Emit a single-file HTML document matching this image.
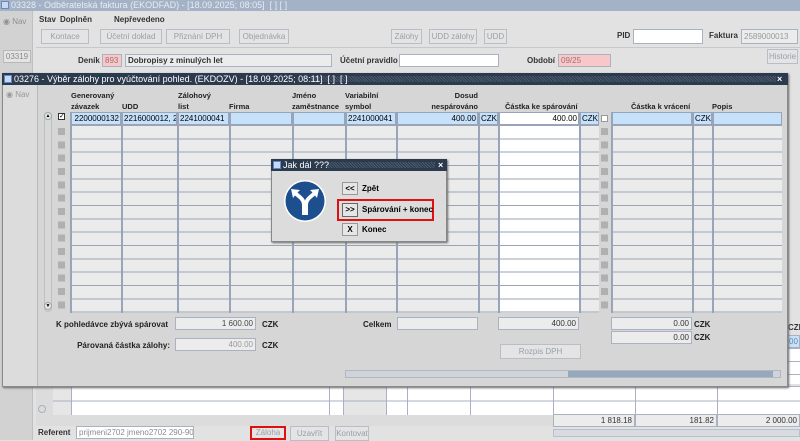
<!DOCTYPE html>
<html><head><meta charset="utf-8"><style>
*{box-sizing:border-box;margin:0;padding:0}
body{width:800px;height:440px;overflow:hidden;background:#e2e2e2;font-family:"Liberation Sans",Arial,sans-serif;font-size:8px;color:#000;position:relative}
.a{position:absolute;white-space:nowrap}
.b{font-weight:bold}
.fld{position:absolute;border:1px solid #a9b2c0;background:#ececec;height:13px;line-height:11px;padding:0 2px;font-size:8px;overflow:hidden;white-space:nowrap}
.btn{position:absolute;border:1px solid #b8bec8;background:#e4e4e4;color:#9aa0a8;text-align:center;height:15px;line-height:13px;font-size:8px;white-space:nowrap;overflow:hidden}
.col{position:absolute;top:125px;height:188px;border-left:2px solid #98a4b8;background:repeating-linear-gradient(to bottom,#9aa4b6 0,#9aa4b6 1px,#ebebeb 1px,#ebebeb 13.33px)}
.r1{position:absolute;top:112px;height:13px;background:#c6e2fb;border:1px solid #98a4b8;border-left-width:2px;line-height:11px;padding:0 1px;overflow:hidden;white-space:nowrap;font-size:8px}
.hd{position:absolute;font-weight:bold;font-size:7.5px;line-height:11px;color:#222;white-space:nowrap}
.cb{position:absolute;left:58px;width:7px;height:7px;border:1px solid #999;background:#eee}
.w{background:#fff}
.rt{text-align:right}
</style></head><body>
<!-- outer window -->
<div class="a" style="left:0;top:0;width:800px;height:11px;background:#a3b2c7"></div>
<div class="a" style="left:1px;top:1px;width:8px;height:8px;background:#c8d8f0;border:1px solid #6a88b8"></div>
<div class="a" style="left:11px;top:0;color:#e8ecf2;font-size:9px;line-height:11px">03328 - Odběratelská faktura (EKODFAD) - [18.09.2025; 08:05]&nbsp; [ ] [ ]</div>
<div class="a" style="left:0;top:11px;width:33px;height:429px;background:#d2d2d2;border-right:1px solid #c0c0c0"></div>
<div class="a" style="left:3px;top:17px;color:#909090;font-size:8px">◉ Nav</div>
<div class="a" style="left:3px;top:50px;width:28px;height:13px;border:1px solid #b8b8b8;background:#e4e4e4;color:#8a8a8a;font-size:8px;text-align:center;line-height:11px">03319</div>
<div class="a b" style="left:39px;top:15px;color:#333">Stav</div>
<div class="a b" style="left:60px;top:15px;color:#333">Doplněn</div>
<div class="a b" style="left:114px;top:15px;color:#333">Nepřevedeno</div>
<div class="btn" style="left:41px;top:29px;width:48px">Kontace</div>
<div class="btn" style="left:100px;top:29px;width:62px">Účetní doklad</div>
<div class="btn" style="left:166px;top:29px;width:64px">Přiznání DPH</div>
<div class="btn" style="left:239px;top:29px;width:50px">Objednávka</div>
<div class="btn" style="left:391px;top:29px;width:31px">Zálohy</div>
<div class="btn" style="left:429px;top:29px;width:48px">UDD zálohy</div>
<div class="btn" style="left:484px;top:29px;width:23px">UDD</div>
<div class="a b" style="left:617px;top:31px;color:#333">PID</div>
<div class="fld w" style="left:633px;top:29px;width:70px;height:15px"></div>
<div class="a b" style="left:709px;top:31px;color:#333">Faktura</div>
<div class="fld" style="left:741px;top:29px;width:57px;height:15px;color:#999;line-height:13px">2589000013</div>
<div class="a" style="left:36px;top:47px;width:764px;height:1px;background:#c8c8c8"></div>
<div class="a b" style="left:78px;top:56px;color:#333">Deník</div>
<div class="fld" style="left:102px;top:54px;width:20px;background:#f8c8c8;color:#a07070">893</div>
<div class="fld" style="left:125px;top:54px;width:207px;color:#333;font-weight:bold">Dobropisy z minulých let</div>
<div class="a b" style="left:340px;top:56px;color:#333">Účetní pravidlo</div>
<div class="fld w" style="left:399px;top:54px;width:100px"></div>
<div class="a b" style="left:527px;top:56px;color:#333">Období</div>
<div class="fld" style="left:558px;top:54px;width:53px;background:#f8c8c8;color:#a07070">09/25</div>
<div class="btn" style="left:767px;top:49px;width:31px">Historie</div>

<!-- outer lower table -->
<div class="a" style="left:36px;top:386px;width:764px;height:40px;background:#dcdcdc"></div>
<div class="a" style="left:53px;top:386px;width:747px;height:29px;background:repeating-linear-gradient(to bottom,#a8b2c2 0,#a8b2c2 1px,#fff 1px,#fff 14.5px)"></div>
<div class="a" style="left:53px;top:386px;width:18px;height:29px;background:repeating-linear-gradient(to bottom,#a8b2c2 0,#a8b2c2 1px,#e6e6e6 1px,#e6e6e6 14.5px)"></div>
<div class="a" style="left:343px;top:386px;width:43px;height:29px;background:repeating-linear-gradient(to bottom,#a8b2c2 0,#a8b2c2 1px,#e6e6e6 1px,#e6e6e6 14.5px)"></div>
<div class="a" style="left:71px;top:386px;width:1px;height:29px;background:#a8b2c2"></div>
<div class="a" style="left:329px;top:386px;width:1px;height:29px;background:#a8b2c2"></div>
<div class="a" style="left:343px;top:386px;width:1px;height:29px;background:#a8b2c2"></div>
<div class="a" style="left:386px;top:386px;width:1px;height:29px;background:#a8b2c2"></div>
<div class="a" style="left:407px;top:386px;width:1px;height:29px;background:#a8b2c2"></div>
<div class="a" style="left:470px;top:386px;width:1px;height:29px;background:#a8b2c2"></div>
<div class="a" style="left:553px;top:386px;width:1px;height:29px;background:#a8b2c2"></div>
<div class="a" style="left:635px;top:386px;width:1px;height:29px;background:#a8b2c2"></div>
<div class="a" style="left:717px;top:386px;width:1px;height:29px;background:#a8b2c2"></div>
<div class="fld rt" style="left:553px;top:414px;width:82px;color:#333">1 818.18</div>
<div class="fld rt" style="left:635px;top:414px;width:82px;color:#333">181.82</div>
<div class="fld rt" style="left:717px;top:414px;width:83px;color:#333">2 000.00</div>
<div class="a" style="left:553px;top:429px;width:247px;height:8px;background:#d8dce2;border:1px solid #b8c0cc"></div>
<div class="a" style="left:38px;top:405px;width:8px;height:8px;border-radius:4px;border:1px solid #a8b0bc"></div>
<div class="a b" style="left:38px;top:428px;color:#333">Referent</div>
<div class="fld w" style="left:76px;top:426px;width:118px;color:#8a8a8a">prijmeni2702 jmeno2702 290-9027</div>
<div class="btn" style="left:250px;top:426px;width:36px;border:2px solid #e01010;height:14px;line-height:10px">Záloha</div>
<div class="btn" style="left:290px;top:426px;width:39px">Uzavřít</div>
<div class="btn" style="left:335px;top:426px;width:34px">Kontovat</div>
<!-- outer right sliver -->
<div class="a b" style="left:788px;top:323px;color:#333">CZK</div>
<div class="fld" style="left:787px;top:335px;width:13px;background:#c6e2fb;color:#6a8ab0;padding:0 1px">00</div>
<div class="a" style="left:787px;top:348px;width:13px;height:36px;background:repeating-linear-gradient(to bottom,#a8b2c2 0,#a8b2c2 1px,#fff 1px,#fff 13px)"></div>

<!-- dialog -->
<div class="a" style="left:2px;top:73px;width:786px;height:314px;background:#d6d6d6;box-shadow:1px 1px 2px #666;border:1px solid #8a8a8a"></div>
<div class="a" style="left:2px;top:73px;width:786px;height:12px;background:#2c3a4e"></div>
<div class="a" style="left:310px;top:76px;width:466px;height:6px;background:repeating-linear-gradient(45deg,#2c3a4e 0,#2c3a4e 1px,#4c5a6e 1px,#4c5a6e 2px)"></div>
<div class="a" style="left:4px;top:75px;width:8px;height:8px;background:#c8d8f0;border:1px solid #5a88d0"></div>
<div class="a" style="left:14px;top:73px;color:#fff;font-size:9px;line-height:12px">03276 - Výběr zálohy pro vyúčtování pohled. (EKDOZV) - [18.09.2025; 08:11]&nbsp; [ ]&nbsp; [ ]</div>
<div class="a" style="left:777px;top:73px;color:#fff;font-size:9px;line-height:12px;font-weight:bold">×</div>
<div class="a" style="left:3px;top:85px;width:35px;height:301px;background:#dcdcdc;border-right:1px solid #b8b8b8"></div>
<div class="a" style="left:6px;top:90px;color:#999;font-size:8px">◉ Nav</div>

<!-- headers -->
<div class="hd" style="left:71px;top:90px">Generovaný<br>závazek</div>
<div class="hd" style="left:122px;top:101px">UDD</div>
<div class="hd" style="left:178px;top:90px">Zálohový<br>list</div>
<div class="hd" style="left:229px;top:101px">Firma</div>
<div class="hd" style="left:292px;top:90px">Jméno<br>zaměstnance</div>
<div class="hd" style="left:345px;top:90px">Variabilní<br>symbol</div>
<div class="hd" style="left:396px;top:90px;width:82px;text-align:right">Dosud<br>nespárováno</div>
<div class="hd" style="left:505px;top:101px">Částka ke spárování</div>
<div class="hd" style="left:631px;top:101px">Částka k vrácení</div>
<div class="hd" style="left:712px;top:101px">Popis</div>

<!-- scrollbar left -->
<div class="a" style="left:44px;top:112px;width:8px;height:200px;border:1px solid #c0c0c0;border-radius:4px;background:#d8d8d8"></div>
<div class="a" style="left:44px;top:112px;width:8px;height:8px;border:1px solid #9aa;border-radius:4px;background:#e8e8e8;font-size:5px;text-align:center;line-height:6px">▲</div>
<div class="a" style="left:44px;top:302px;width:8px;height:8px;border:1px solid #9aa;border-radius:4px;background:#e8e8e8;font-size:5px;text-align:center;line-height:6px">▼</div>

<!-- row1 -->
<div class="cb" style="top:113px;background:#fff;border-color:#333;font-size:7px;line-height:5px;text-align:center">✓</div>
<div class="r1 rt" style="left:70px;width:51px">2200000132</div>
<div class="r1" style="left:121px;width:56px">2216000012, 25</div>
<div class="r1" style="left:177px;width:52px">2241000041</div>
<div class="r1" style="left:229px;width:63px"></div>
<div class="r1" style="left:292px;width:53px"></div>
<div class="r1" style="left:345px;width:51px">2241000041</div>
<div class="r1 rt" style="left:396px;width:82px">400.00</div>
<div class="r1" style="left:478px;width:20px">CZK</div>
<div class="r1 rt" style="left:498px;width:81px;background:#fff">400.00</div>
<div class="r1" style="left:579px;width:20px">CZK</div>
<div class="cb" style="top:115px;left:601px;background:#fff"></div>
<div class="r1" style="left:611px;width:81px"></div>
<div class="r1" style="left:692px;width:20px">CZK</div>
<div class="r1" style="left:712px;width:70px"></div>

<!-- empty rows -->
<div class="col" style="left:70px;width:51px"></div>
<div class="col" style="left:121px;width:56px"></div>
<div class="col" style="left:177px;width:52px"></div>
<div class="col" style="left:229px;width:63px"></div>
<div class="col" style="left:292px;width:53px"></div>
<div class="col" style="left:345px;width:51px"></div>
<div class="col" style="left:396px;width:82px"></div>
<div class="col" style="left:478px;width:20px"></div>
<div class="col" style="left:498px;width:81px;background:repeating-linear-gradient(to bottom,#9aa4b6 0,#9aa4b6 1px,#fff 1px,#fff 13.33px)"></div>
<div class="col" style="left:579px;width:20px"></div>
<div class="col" style="left:611px;width:81px"></div>
<div class="col" style="left:692px;width:20px"></div>
<div class="col" style="left:712px;width:70px"></div>
<div class="a" style="left:58px;top:128px;width:7px;height:185px;background:repeating-linear-gradient(to bottom,#b0b0b0 0,#b0b0b0 7px,transparent 7px,transparent 13.33px)"></div>
<div class="a" style="left:601px;top:128px;width:7px;height:185px;background:repeating-linear-gradient(to bottom,#b0b0b0 0,#b0b0b0 7px,transparent 7px,transparent 13.33px)"></div>

<!-- summary -->
<div class="a b rt" style="left:40px;top:320px;width:128px;color:#222">K pohledávce zbývá spárovat</div>
<div class="fld rt" style="left:175px;top:317px;width:81px;color:#444">1 600.00</div>
<div class="a b" style="left:262px;top:320px;color:#222">CZK</div>
<div class="a b" style="left:363px;top:320px;color:#222">Celkem</div>
<div class="fld" style="left:397px;top:317px;width:81px"></div>
<div class="fld rt" style="left:498px;top:317px;width:81px;color:#333">400.00</div>
<div class="fld rt" style="left:611px;top:317px;width:81px;color:#333">0.00</div>
<div class="a b" style="left:694px;top:320px;color:#222">CZK</div>
<div class="fld rt" style="left:611px;top:331px;width:81px;color:#333">0.00</div>
<div class="a b" style="left:694px;top:333px;color:#222">CZK</div>
<div class="a b rt" style="left:40px;top:341px;width:130px;color:#222">Párovaná částka zálohy:</div>
<div class="fld rt" style="left:175px;top:338px;width:81px;color:#999">400.00</div>
<div class="a b" style="left:262px;top:341px;color:#222">CZK</div>
<div class="btn" style="left:500px;top:344px;width:81px">Rozpis DPH</div>
<div class="a" style="left:345px;top:370px;width:436px;height:8px;background:#d0d4da;border:1px solid #b0b8c4"></div>
<div class="a" style="left:568px;top:371px;width:205px;height:6px;background:#98a8bc"></div>

<!-- modal -->
<div class="a" style="left:271px;top:159px;width:176px;height:83px;background:#dcdcdc;border:1px solid #888;box-shadow:1px 1px 2px #666"></div>
<div class="a" style="left:271px;top:159px;width:176px;height:12px;background:#2c3a4e"></div>
<div class="a" style="left:327px;top:162px;width:108px;height:6px;background:repeating-linear-gradient(45deg,#2c3a4e 0,#2c3a4e 1px,#4c5a6e 1px,#4c5a6e 2px)"></div>
<div class="a" style="left:273px;top:161px;width:8px;height:8px;background:#c8d8f0;border:1px solid #5a88d0"></div>
<div class="a" style="left:283px;top:159px;color:#fff;font-size:9px;line-height:12px">Jak dál ???</div>
<div class="a" style="left:438px;top:159px;color:#fff;font-size:9px;line-height:12px;font-weight:bold">×</div>
<svg class="a" style="left:283px;top:179px" width="44" height="44" viewBox="0 0 44 44">
<circle cx="22" cy="22" r="21" fill="#fff"/><circle cx="22" cy="22" r="19.5" fill="#1d4f8e"/>
<path d="M19 36 V26 Q19 22 15 19 L12 16.5 L10 19 L8 10 L17 11 L14.5 13.5 L18 16.5 Q22 20 22 22 Q22 20 26 16.5 L29.5 13.5 L27 11 L36 10 L34 19 L32 16.5 L29 19 Q25 22 25 26 V36 Z" fill="#fff"/>
</svg>
<div class="a" style="left:342px;top:182px;width:16px;height:13px;border:1px solid #999;background:#e6e6e6;font-weight:bold;text-align:center;line-height:11px;font-size:8px">&lt;&lt;</div>
<div class="a b" style="left:362px;top:184px">Zpět</div>
<div class="a" style="left:337px;top:199px;width:97px;height:22px;border:2px solid #e01010"></div>
<div class="a" style="left:342px;top:203px;width:16px;height:14px;border:1px solid #666;background:#e6e6e6;font-weight:bold;text-align:center;line-height:12px;font-size:8px">&gt;&gt;</div>
<div class="a b" style="left:362px;top:205px">Spárování + konec</div>
<div class="a" style="left:342px;top:223px;width:16px;height:13px;border:1px solid #999;background:#e6e6e6;font-weight:bold;text-align:center;line-height:11px;font-size:8px">X</div>
<div class="a b" style="left:362px;top:225px">Konec</div>
</body></html>
